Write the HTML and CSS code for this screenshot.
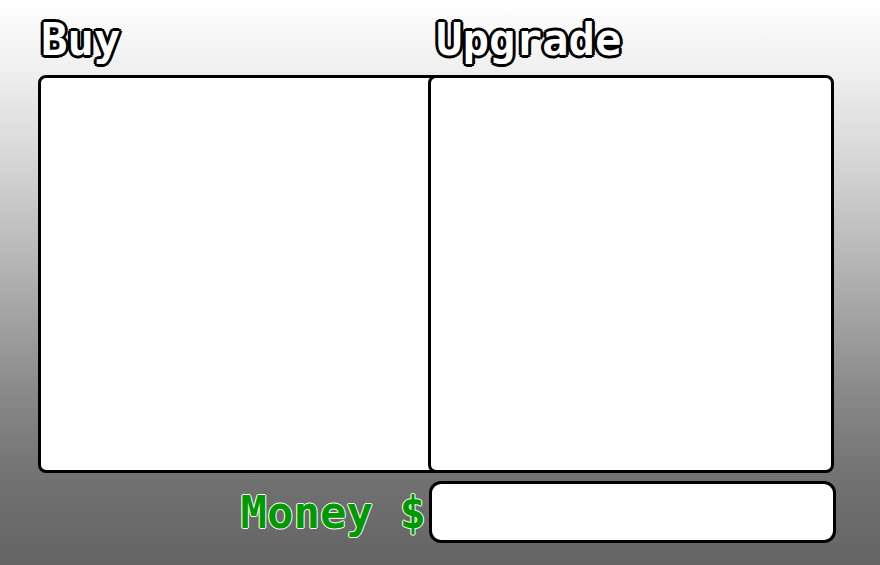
FILE: index.html
```html
<!DOCTYPE html>
<html lang="en">
<head>
<meta charset="utf-8">
<title>Shop</title>
<link rel="stylesheet" href="styles.css">
</head>
<body>
<main class="shop">
  <div class="columns">
    <section class="column buy">
      <h2 class="title">Buy</h2>
      <div class="panel"></div>
    </section>
    <section class="column upgrade">
      <h2 class="title">Upgrade</h2>
      <div class="panel"></div>
    </section>
  </div>
  <div class="wallet">
    <label class="money" for="money">Money $</label>
    <input class="amount" id="money" type="text" readonly>
  </div>
</main>
</body>
</html>
```
FILE: styles.css
```css
* { box-sizing: border-box; }
body {
  margin: 0;
  min-height: 100vh;
  display: flex;
  font-family: "Droid Sans Mono", "DejaVu Sans Mono", monospace;
  background: linear-gradient(#fff 0%, #f0f0f0 12%, #dadada 26%, #b8b8b8 45%, #888 70%, #707070 86%, #646464 100%);
}
.shop {
  flex: 1;
  display: flex;
  flex-direction: column;
  gap: 8px;
  padding: 8px 44px 22px 38px;
}
.columns { flex: 1; display: flex; padding-right: 2px; }
.column { display: flex; flex-direction: column; }
.buy { flex: 1; margin-right: -20px; }
.upgrade { flex: 0 0 51%; }
.title {
  margin: 0;
  padding-left: 3px;
  height: 67px;
  line-height: 64px;
  font-size: 44px;
  font-weight: bold;
  color: #fff;
  /* A ring of hard shadows gives the letters a round-cornered outline. */
  text-shadow:
    3px 0 #000, -3px 0 #000, 0 3px #000, 0 -3px #000,
    2px 2px #000, -2px 2px #000, 2px -2px #000, -2px -2px #000;
}
.panel {
  flex: 1;
  background: #fff;
  border: 3px solid #000;
  border-radius: 8px;
}
.upgrade .title { padding-left: 8px; }
.wallet { display: flex; }
.money {
  flex: 1;
  text-align: right;
  padding-right: 3px;
  line-height: 64px;
  height: 62px;
  font-size: 44px;
  font-weight: bold;
  color: #090;
  text-shadow:
    1px 0 #fff, -1px 0 #fff, 0 1px #fff, 0 -1px #fff;
}
.amount {
  flex: 0 0 51%;
  height: 62px;
  background: #fff;
  border: 3px solid #000;
  border-radius: 12px;
  font: inherit;
}
```
